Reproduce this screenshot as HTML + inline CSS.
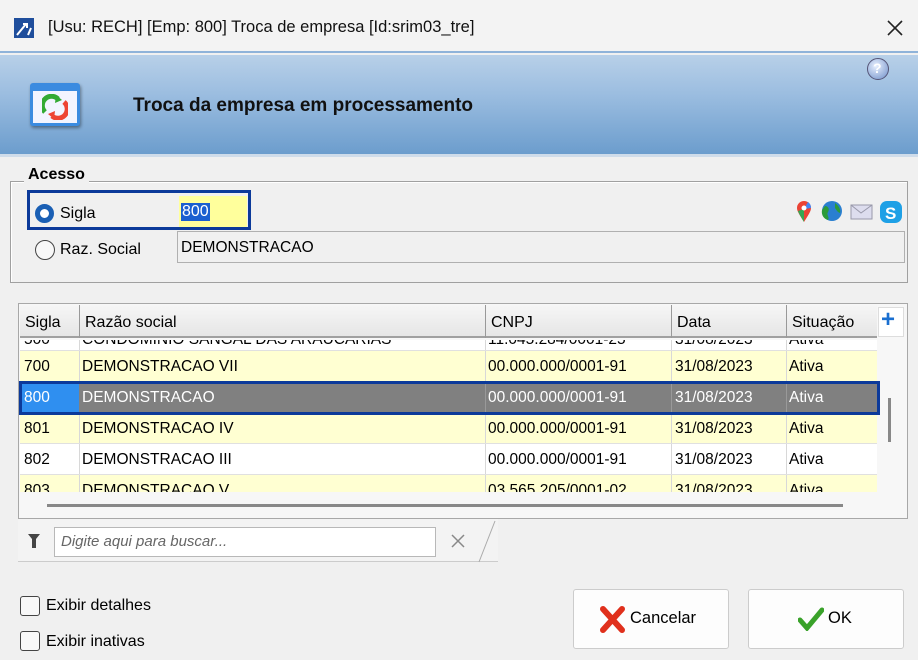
<!DOCTYPE html>
<html><head><meta charset="utf-8"><style>
*{box-sizing:border-box;margin:0;padding:0}
body{width:918px;height:660px;overflow:hidden;background:#f0f0f0;font-family:"Liberation Sans",sans-serif;font-size:15px;color:#000;position:relative}
.a{position:absolute}
.t{white-space:nowrap}
.row{position:absolute;left:20px;width:857px;height:31px;border-bottom:1px solid #e0e0e0}
.row span{position:absolute;top:7px;white-space:nowrap;font-size:15.5px}
.vl{position:absolute;top:0;width:1px;height:100%;background:#d8d8d8}
</style></head><body>
<div class="a" style="left:0;top:0;width:918px;height:53px;background:#f3f3f3;border-bottom:2px solid #8fb3d9"></div>
<svg class="a" style="left:14px;top:18px" width="20" height="20"><rect width="20" height="20" fill="#1f4e9c"/><path d="M3 17 L12 6 M9 6 h4 v4" stroke="#fff" stroke-width="2" fill="none"/><path d="M14 17 l3-7" stroke="#fff" stroke-width="2"/></svg>
<div class="a t" style="left:48px;top:18px;font-size:16.5px;color:#111">[Usu: RECH] [Emp: 800] Troca de empresa [Id:srim03_tre]</div>
<svg class="a" style="left:886px;top:19px" width="18" height="18"><path d="M2 2L16 16M16 2L2 16" stroke="#222" stroke-width="1.6"/></svg>
<div class="a" style="left:0;top:55px;width:918px;height:102px;background:linear-gradient(#b8d0e8,#9bbde0 40%,#6c9dcd);border-bottom:3px solid #cfdcea"></div>
<div class="a" style="left:867px;top:58px;width:22px;height:22px;border-radius:50%;background:radial-gradient(circle at 40% 35%,#e8f0ff,#6f8fc8);border:1px solid #557"></div>
<div class="a t" style="left:873px;top:60px;color:#fff;font-weight:bold;font-size:14px">?</div>
<div class="a" style="left:30px;top:83px;width:50px;height:43px;background:#f2f4ff;border:3px solid #3b8be0;border-top-width:8px;border-radius:3px;box-shadow:1px 2px 3px rgba(0,0,0,.4)"></div>
<svg class="a" style="left:42px;top:94px" width="26" height="26"><path d="M3 18 A9 9 0 0 1 16 5" stroke="#3a3" stroke-width="5" fill="none"/><path d="M14 1 l6 5 -7 3z" fill="#3a3"/><path d="M22 8 A9 9 0 0 1 10 22" stroke="#e43" stroke-width="5" fill="none"/><path d="M12 25 l-6 -5 7-3z" fill="#e43"/></svg>
<div class="a t" style="left:133px;top:95px;font-size:19px;font-weight:bold;color:#111">Troca da empresa em processamento</div>
<div class="a" style="left:10px;top:181px;width:898px;height:102px;border:1px solid #a0a0a0;box-shadow:1px 1px 0 #fff inset"></div>
<div class="a t" style="left:24px;top:166px;padding:0 4px;background:#f0f0f0;font-weight:bold;font-size:16px">Acesso</div>
<div class="a" style="left:27px;top:190px;width:224px;height:40px;border:3px solid #0c3a9a"></div>
<div class="a" style="left:35px;top:204px;width:19px;height:19px;border-radius:50%;border:5px solid #1a5fb4;background:#fff"></div>
<div class="a t" style="left:60px;top:205px;font-size:16px">Sigla</div>
<div class="a" style="left:179px;top:196px;width:68px;height:31px;background:#ffff9c"></div>
<div class="a t" style="left:181px;top:203px;font-size:16px;color:#fff;background:#1a5fd0;padding:0 1px">800</div>
<div class="a" style="left:35px;top:240px;width:20px;height:20px;border-radius:50%;border:1.5px solid #444;background:#f8f8f8"></div>
<div class="a t" style="left:60px;top:241px;font-size:16px">Raz. Social</div>
<div class="a" style="left:177px;top:231px;width:728px;height:32px;border:1px solid #b0b0b0;background:#f0f0f0"></div>
<div class="a t" style="left:181px;top:239px;font-size:15.5px">DEMONSTRACAO</div>
<svg class="a" style="left:795px;top:199px" width="112" height="26"><path d="M9 23 C4 15 2 12 2 9 A7 7 0 0 1 16 9 C16 12 14 15 9 23z" fill="#ea4335"/><path d="M9 23 C6 18 4 15 3 12 L9 10z" fill="#34a853"/><path d="M16 9 L9 10 L13 3 A7 7 0 0 1 16 9z" fill="#4285f4"/><circle cx="9" cy="9" r="2.5" fill="#fff"/><circle cx="37" cy="12" r="10" fill="#2a7fd0"/><path d="M30 7c3 0 5 3 3 6s2 5 0 8c-4-1-7-5-6-10zM40 4c3 2 6 6 5 10-3-1-4-4-5-5z" fill="#2c9b3a"/><rect x="56" y="6" width="21" height="14" fill="#dde" stroke="#99a"/><path d="M56 6l10 8 11-8" stroke="#99a" fill="none"/><rect x="85" y="2" width="22" height="22" rx="7" fill="#1ea0e6"/><text x="90" y="20" font-family="Liberation Sans" font-weight="bold" font-size="17" fill="#fff">S</text></svg>
<div class="a" style="left:18px;top:303px;width:890px;height:216px;border:1px solid #a8a8a8;background:#f7f7f7"></div>
<div class="a" style="left:20px;top:340px;width:857px;height:152px;overflow:hidden">
 <div class="row" style="left:0;top:-20px;background:#fff"><span style="left:4px;top:11px">500</span><span style="left:62px;top:11px">CONDOMINIO SANGAL DAS ARAUCARIAS</span><span style="left:468px;top:11px">11.045.284/0001-25</span><span style="left:655px;top:11px">31/08/2023</span><span style="left:769px;top:11px">Ativa</span><i class="vl" style="left:59px"></i><i class="vl" style="left:465px"></i><i class="vl" style="left:651px"></i><i class="vl" style="left:766px"></i></div>
 <div class="row" style="left:0;top:11px;background:#ffffd2"><span style="left:4px">700</span><span style="left:62px">DEMONSTRACAO VII</span><span style="left:468px">00.000.000/0001-91</span><span style="left:655px">31/08/2023</span><span style="left:769px">Ativa</span><i class="vl" style="left:59px"></i><i class="vl" style="left:465px"></i><i class="vl" style="left:651px"></i><i class="vl" style="left:766px"></i></div>
 <div class="row" style="left:0;top:42px;background:#808080;color:#fff"><span style="left:0;top:0;width:59px;height:31px;background:#2f8ff0"></span><span style="left:4px">800</span><span style="left:62px">DEMONSTRACAO</span><span style="left:468px">00.000.000/0001-91</span><span style="left:655px">31/08/2023</span><span style="left:769px">Ativa</span><i class="vl" style="left:465px;background:#999"></i><i class="vl" style="left:651px;background:#999"></i><i class="vl" style="left:766px;background:#999"></i></div>
 <div class="row" style="left:0;top:73px;background:#ffffd2"><span style="left:4px">801</span><span style="left:62px">DEMONSTRACAO IV</span><span style="left:468px">00.000.000/0001-91</span><span style="left:655px">31/08/2023</span><span style="left:769px">Ativa</span><i class="vl" style="left:59px"></i><i class="vl" style="left:465px"></i><i class="vl" style="left:651px"></i><i class="vl" style="left:766px"></i></div>
 <div class="row" style="left:0;top:104px;background:#fff"><span style="left:4px">802</span><span style="left:62px">DEMONSTRACAO III</span><span style="left:468px">00.000.000/0001-91</span><span style="left:655px">31/08/2023</span><span style="left:769px">Ativa</span><i class="vl" style="left:59px"></i><i class="vl" style="left:465px"></i><i class="vl" style="left:651px"></i><i class="vl" style="left:766px"></i></div>
 <div class="row" style="left:0;top:135px;background:#ffffd2"><span style="left:4px">803</span><span style="left:62px">DEMONSTRACAO V</span><span style="left:468px">03.565.205/0001-02</span><span style="left:655px">31/08/2023</span><span style="left:769px">Ativa</span><i class="vl" style="left:59px"></i><i class="vl" style="left:465px"></i><i class="vl" style="left:651px"></i><i class="vl" style="left:766px"></i></div>
</div>
<div class="a" style="left:20px;top:305px;width:857px;height:33px;background:linear-gradient(#f6f6f6,#e6e6e6);border-bottom:2px solid #a0a0a0"></div>
<div class="a t" style="left:25px;top:314px;font-size:16px">Sigla</div>
<div class="a t" style="left:85px;top:314px;font-size:16px">Razão social</div>
<div class="a t" style="left:491px;top:314px;font-size:16px">CNPJ</div>
<div class="a t" style="left:677px;top:314px;font-size:16px">Data</div>
<div class="a t" style="left:792px;top:314px;font-size:16px">Situação</div>
<div class="a" style="left:79px;top:305px;width:1px;height:33px;background:#999"></div>
<div class="a" style="left:485px;top:305px;width:1px;height:33px;background:#999"></div>
<div class="a" style="left:671px;top:305px;width:1px;height:33px;background:#999"></div>
<div class="a" style="left:786px;top:305px;width:1px;height:33px;background:#999"></div>
<div class="a" style="left:878px;top:307px;width:26px;height:30px;background:#fff;border:1px solid #ddd"></div>
<div class="a t" style="left:881px;top:306px;font-size:24px;font-weight:bold;color:#1a6fd0">+</div>
<div class="a" style="left:19px;top:381px;width:861px;height:34px;border:3px solid #0c3a9a"></div>
<div class="a" style="left:888px;top:398px;width:3px;height:44px;background:#888"></div>
<div class="a" style="left:47px;top:504px;width:796px;height:3px;background:#888"></div>
<div class="a" style="left:18px;top:519px;width:480px;height:43px;border-bottom:1px solid #ccc;background:#f3f3f3"></div>
<svg class="a" style="left:27px;top:533px" width="14" height="16"><path d="M1 1h12l-4 5v9h-4v-9z" fill="#444"/></svg>
<div class="a" style="left:54px;top:527px;width:382px;height:30px;border:1px solid #b8b8b8;background:#fff"></div>
<div class="a t" style="left:61px;top:533px;font-style:italic;color:#666;font-size:15px">Digite aqui para buscar...</div>
<svg class="a" style="left:451px;top:534px" width="14" height="14"><path d="M1 1L13 13M13 1L1 13" stroke="#888" stroke-width="1.5"/></svg>
<svg class="a" style="left:475px;top:519px" width="30" height="44"><path d="M4 43L20 2" stroke="#aaa"/></svg>
<div class="a" style="left:20px;top:596px;width:20px;height:20px;border:1.5px solid #444;border-radius:3px;background:#f8f8f8"></div>
<div class="a t" style="left:46px;top:597px;font-size:16px">Exibir detalhes</div>
<div class="a" style="left:20px;top:631px;width:20px;height:20px;border:1.5px solid #444;border-radius:3px;background:#f8f8f8"></div>
<div class="a t" style="left:46px;top:633px;font-size:16px">Exibir inativas</div>
<div class="a" style="left:573px;top:589px;width:156px;height:60px;background:#fdfdfd;border:1px solid #ccc;border-radius:3px"></div>
<svg class="a" style="left:600px;top:606px" width="26" height="27"><path d="M3 3L22 24M22 3L3 24" stroke="#e0301c" stroke-width="6" stroke-linecap="round"/></svg>
<div class="a t" style="left:630px;top:609px;font-size:16.5px">Cancelar</div>
<div class="a" style="left:748px;top:589px;width:156px;height:60px;background:#fdfdfd;border:1px solid #ccc;border-radius:3px"></div>
<svg class="a" style="left:798px;top:607px" width="26" height="24"><path d="M2 13L9 21L24 3" stroke="#3aa22a" stroke-width="5" fill="none" stroke-linecap="round"/></svg>
<div class="a t" style="left:828px;top:609px;font-size:16.5px">OK</div>
</body></html>
